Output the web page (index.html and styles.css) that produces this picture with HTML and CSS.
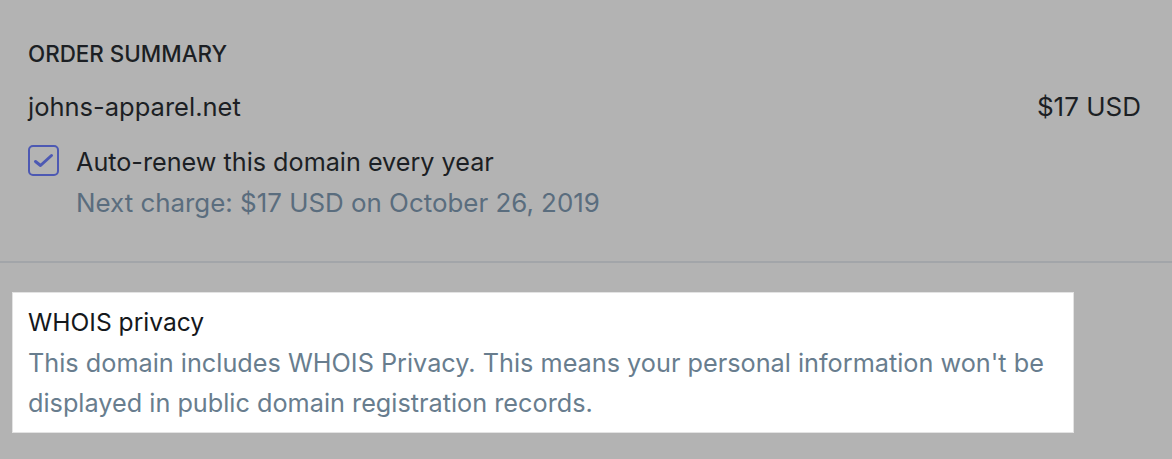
FILE: index.html
```html
<!DOCTYPE html>
<html>
<head>
<meta charset="utf-8">
<link rel="stylesheet" href="styles.css">
</head>
<body>
<div class="page">
  <section class="summary">
    <h2 class="title">ORDER SUMMARY</h2>
    <div class="row">
      <span class="domain">johns-apparel.net</span>
      <span class="price">$17 USD</span>
    </div>
    <div class="renew">
      <span class="checkbox">
        <svg width="21" height="17" viewBox="0 0 21 17"><path d="M2.5 9.5 L7.5 13.5 L18.5 3.5" fill="none" stroke="#4d59b3" stroke-width="3" stroke-linecap="round" stroke-linejoin="round"/></svg>
      </span>
      <div class="renew-text">
        <div class="renew-label">Auto-renew this domain every year</div>
        <div class="renew-sub">Next charge: $17 USD on October 26, 2019</div>
      </div>
    </div>
  </section>
  <div class="divider"></div>
  <div class="whois">
    <div class="whois-title">WHOIS privacy</div>
    <p class="whois-desc">This domain includes WHOIS Privacy. This means your personal information won't be displayed in public domain registration records.</p>
  </div>
</div>
</body>
</html>
```
FILE: styles.css
```css
html, body {
  margin: 0;
  padding: 0;
  background: #b3b3b3;
  font-family: Inter, "Noto Sans", sans-serif;
}
.page {
  width: 1172px;
  height: 459px;
  overflow: hidden;
}
.summary {
  padding: 41px 31px 0 28px;
  height: 221px;
  box-sizing: border-box;
}
.title {
  margin: 0;
  font-size: 22.4px;
  font-weight: 500;
  line-height: 26px;
  color: #1c1f24;
}
.row {
  display: flex;
  justify-content: space-between;
  align-items: center;
  margin-top: 25px;
  font-size: 25.5px;
  line-height: 30px;
  color: #1c1f24;
}
.price {
  font-size: 26px;
}
.renew {
  display: flex;
  align-items: flex-start;
  margin-top: 23px;
  gap: 17px;
}
.checkbox {
  width: 31px;
  height: 31px;
  box-sizing: border-box;
  border: 2px solid #4d59b3;
  border-radius: 5px;
  display: flex;
  align-items: center;
  justify-content: center;
  flex: none;
}
.renew-label {
  font-size: 25.2px;
  line-height: 32px;
  margin-top: 1px;
  color: #1c1f24;
}
.renew-sub {
  font-size: 25.9px;
  line-height: 32px;
  margin-top: 9px;
  color: #5a6d7e;
}
.divider {
  height: 2px;
  background: #a2a5a9;
  margin-top: 40px;
}
.whois {
  margin: 29px 0 0 12px;
  width: 1062px;
  height: 141px;
  box-sizing: border-box;
  background: #fff;
  border: 1px solid #e3e3e3;
  padding: 14px 15px 0 15px;
}
.whois-title {
  font-size: 24.6px;
  line-height: 30px;
  color: #15181c;
}
.whois-desc {
  margin: 6px 0 0;
  font-size: 25.25px;
  line-height: 40px;
  color: #687d8e;
}
```
